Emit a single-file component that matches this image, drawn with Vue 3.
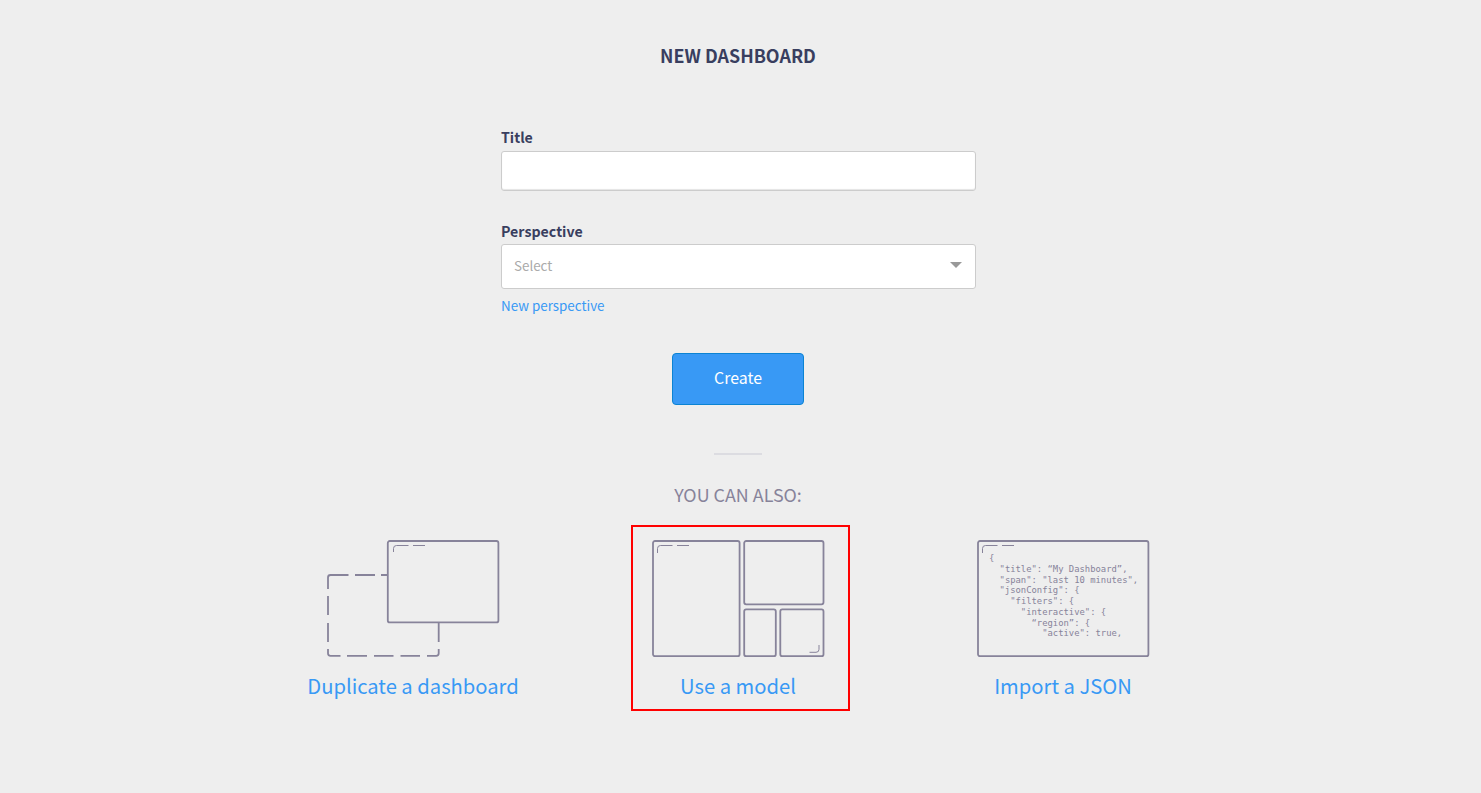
<script setup>
const code = [
  { indent: 0, text: '{' },
  { indent: 2, text: '"title": “My Dashboard”,' },
  { indent: 2, text: '"span": "last 10 minutes",' },
  { indent: 2, text: '"jsonConfig": {' },
  { indent: 4, text: '"filters": {' },
  { indent: 6, text: '"interactive": {' },
  { indent: 8, text: '“region”: {' },
  { indent: 10, text: '"active": true,' },
]
const pitch = 5.33
</script>

<template>
  <main class="page">
    <h1>NEW DASHBOARD</h1>
    <form class="form" @submit.prevent>
      <label class="label" for="title">Title</label>
      <input id="title" class="input" type="text" />
      <div class="label second">Perspective</div>
      <div class="select">
        <span>Select</span>
        <svg width="12" height="6" viewBox="0 0 12 6"><path d="M0 0H12L6 6Z" fill="#999" /></svg>
      </div>
      <a class="new">New perspective</a>
      <button class="create" type="submit">Create</button>
    </form>
    <div class="rule"></div>
    <h2>YOU CAN ALSO:</h2>
    <section class="options">
      <div class="option">
        <svg class="art" width="174" height="120" viewBox="0 0 174 120">
          <rect x="61.8" y="2" width="110.600" height="81.400" rx="2" />
          <path class="thin" d="M67.500 13V9.500Q67.500 6.500 70.500 6.500H82.500M87 6.500H99" />
          <path d="M2 50V38.500Q2 36 4.500 36H22.500M29 36H49M55 36H62M2 57V76M2 84V103M2 110V114.300Q2 116.800 4.500 116.800H14.500M21 116.800H41M48 116.800H67.500M74.500 116.800H94M101 116.800H110.200Q112.700 116.800 112.700 114.300V110M112.700 84V103" />
        </svg>
        <a class="link">Duplicate a dashboard</a>
      </div>
      <div class="option">
        <svg class="art" width="174" height="120" viewBox="0 0 174 120">
          <rect x="2" y="2" width="86.600" height="115.200" rx="2" />
          <rect x="93.200" y="2" width="79.300" height="63.300" rx="2" />
          <rect x="93.200" y="70.400" width="31.600" height="46.800" rx="2" />
          <rect x="129.300" y="70.400" width="43.200" height="46.800" rx="2" />
          <path class="thin" d="M6.500 14V9.500Q6.500 6.500 9.500 6.500H21.500M26 6.500H38M158.500 113.300H165Q168 113.300 168 110.300V106" />
        </svg>
        <a class="link">Use a model</a>
        <div class="highlight"></div>
      </div>
      <div class="option">
        <svg class="art" width="174" height="120" viewBox="0 0 174 120">
          <rect x="2" y="2" width="170.400" height="115.200" rx="2" />
          <path class="thin" d="M6.500 14V9.500Q6.500 6.500 9.500 6.500H21.500M26 6.500H38" />
          <text
            v-for="(line, i) in code"
            :key="i"
            :x="12.9 + line.indent * pitch"
            :y="22.2 + i * 10.73"
            :textLength="line.text.length * pitch"
            lengthAdjust="spacingAndGlyphs"
          >{{ line.text }}</text>
        </svg>
        <a class="link">Import a JSON</a>
      </div>
    </section>
  </main>
</template>

<style>
body {
  background: #eee;
}
</style>

<style scoped>
.page {
  width: 1476px;
  height: 793px;
  box-sizing: border-box;
  padding-top: 41px;
  display: flex;
  flex-direction: column;
  align-items: center;
  background: #eee;
  color: #393e5f;
  font-family: "Noto Sans CJK SC", "Noto Sans", sans-serif;
}
h1 {
  margin: 0;
  font-size: 17.9px;
  line-height: 28px;
  font-weight: 700;
  white-space: nowrap;
}
.form {
  width: 475px;
  margin-top: 58px;
  margin-left: 1px;
  display: flex;
  flex-direction: column;
}
.label {
  font-size: 14.2px;
  line-height: 20px;
  font-weight: 700;
  height: 24px;
}
.second {
  margin-top: 30px;
  height: 23px;
}
.input {
  display: block;
  height: 40px;
  box-sizing: border-box;
  border: 1px solid #ccc;
  border-radius: 3px;
  background: #fff;
  box-shadow: inset 0 -1px 1px #e4e4e4;
  outline: none;
}
.select {
  height: 45px;
  box-sizing: border-box;
  border: 1px solid #ccc;
  border-radius: 3px;
  background: #fff;
  padding: 0 13px 4px 12px;
  display: flex;
  align-items: center;
  justify-content: space-between;
  color: #aaa;
  font-size: 13.4px;
  line-height: 20px;
}
.new {
  margin-top: 6px;
  font-size: 13.4px;
  line-height: 20px;
  color: #3899f5;
}
.create {
  align-self: center;
  width: 132px;
  height: 52px;
  margin: 38px 1px 0 0;
  padding: 0 0 3px;
  border: 1px solid #0b83d3;
  border-radius: 4px;
  background: #3899f5;
  color: #fff;
  font-family: inherit;
  font-size: 15.9px;
}
.rule {
  width: 48px;
  height: 2px;
  margin-top: 48px;
  background: #dcdce1;
}
h2 {
  margin: 25px 0 0;
  font-size: 17.9px;
  line-height: 28px;
  font-weight: 400;
  color: #87839a;
}
.options {
  display: flex;
  margin-top: 31px;
}
.option {
  position: relative;
  width: 325px;
  display: flex;
  flex-direction: column;
  align-items: center;
}
.art {
  display: block;
}
.art rect,
.art path {
  fill: none;
  stroke: #87839a;
  stroke-width: 1.8;
}
.art .thin {
  stroke-width: 1;
}
.art text {
  fill: #87839a;
  font-family: "DejaVu Sans Mono", monospace;
  font-size: 8.2px;
}
.link {
  margin-top: 12px;
  color: #3899f5;
  font-size: 20.2px;
  line-height: 30px;
  white-space: nowrap;
}
.highlight {
  position: absolute;
  left: 55.5px;
  top: -14px;
  width: 219px;
  height: 186px;
  box-sizing: border-box;
  border: 2px solid #f00;
}
</style>
